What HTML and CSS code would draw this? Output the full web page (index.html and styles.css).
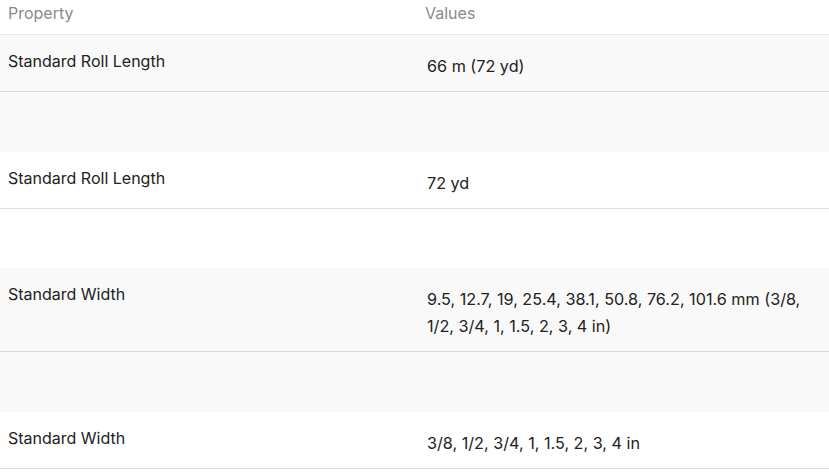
FILE: index.html
```html
<!DOCTYPE html>
<html>
<head>
<meta charset="utf-8">
<link rel="stylesheet" href="styles.css">
</head>
<body>
<div class="table">
  <div class="row head">
    <div class="prop">Property</div>
    <div class="val">Values</div>
  </div>
  <div class="group shaded">
    <div class="row">
      <div class="prop">Standard Roll Length</div>
      <div class="val">66 m (72 yd)</div>
    </div>
    <div class="spacer"></div>
  </div>
  <div class="group">
    <div class="row">
      <div class="prop">Standard Roll Length</div>
      <div class="val">72 yd</div>
    </div>
    <div class="spacer spacer-short"></div>
  </div>
  <div class="group shaded">
    <div class="row">
      <div class="prop">Standard Width</div>
      <div class="val">9.5, 12.7, 19, 25.4, 38.1, 50.8, 76.2, 101.6 mm (3/8, 1/2, 3/4, 1, 1.5, 2, 3, 4 in)</div>
    </div>
    <div class="spacer"></div>
  </div>
  <div class="group">
    <div class="row">
      <div class="prop">Standard Width</div>
      <div class="val">3/8, 1/2, 3/4, 1, 1.5, 2, 3, 4 in</div>
    </div>
  </div>
</div>
</body>
</html>
```
FILE: styles.css
```css
html, body {
  margin: 0;
  padding: 0;
  background: #ffffff;
}
body {
  font-family: Inter, "Noto Sans", sans-serif;
  color: #222222;
}
.table {
  display: flex;
  flex-direction: column;
}
.row {
  display: grid;
  grid-template-columns: 419px 1fr;
  border-bottom: 1px solid rgba(0, 0, 0, 0.13);
}
.prop {
  padding: 14px 8px 16px;
  font-size: 16px;
  line-height: 24px;
}
.val {
  padding: 18px 24px 11px 8px;
  font-size: 16.2px;
  line-height: 27px;
}
.head {
  border-bottom-color: #e6e6e6;
}
.head .prop,
.head .val {
  padding: 1px 8px 9px;
  font-size: 16px;
  line-height: 24px;
  color: #8a8a8a;
}
.head .val {
  padding-left: 6px;
}
.shaded {
  background: #f9f9f9;
}
.spacer {
  height: 60px;
}
.spacer-short {
  height: 59px;
}
```
